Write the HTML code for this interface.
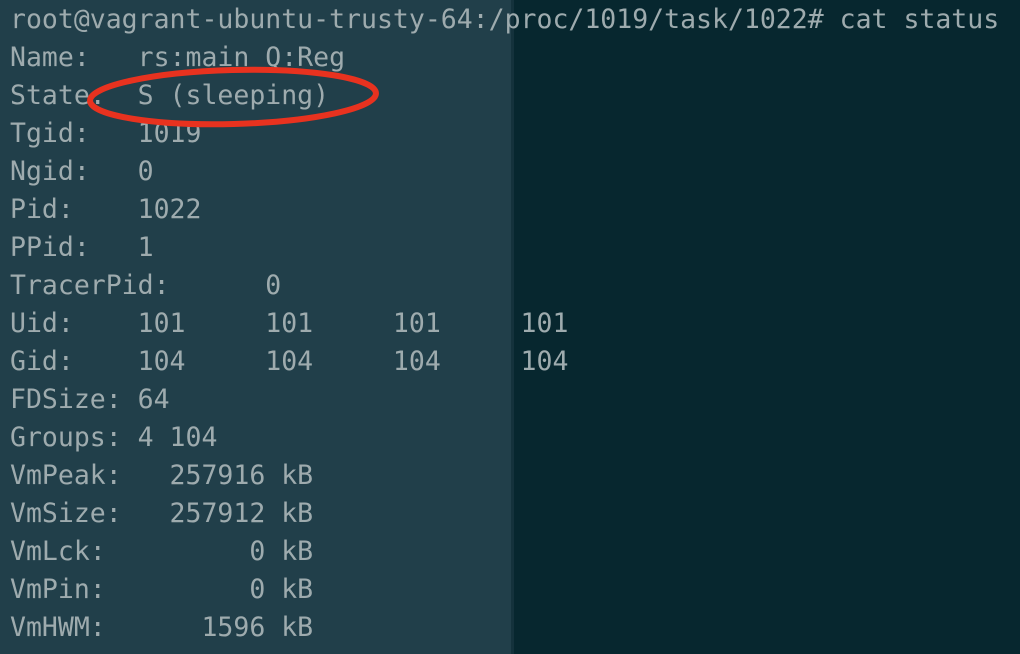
<!DOCTYPE html>
<html><head><meta charset="utf-8"><style>
html,body{margin:0;padding:0;width:1020px;height:654px;overflow:hidden;background:#07272f;}
#w{position:relative;width:1020px;height:654px;overflow:hidden;}
.left{position:absolute;left:0;top:0;width:511px;height:654px;background:#213f4a;}
.edge{position:absolute;left:511px;top:0;width:3px;height:654px;background:#14323c;}
pre{position:absolute;left:10px;top:1px;margin:0;font-family:"DejaVu Sans Mono","Liberation Mono",monospace;font-size:26.5px;line-height:38px;color:#9eabae;tab-size:8;white-space:pre;}
svg{position:absolute;left:0;top:0;}
</style></head><body><div id="w">
<div class="left"></div><div class="edge"></div>
<pre>root@vagrant-ubuntu-trusty-64:/proc/1019/task/1022# cat status
Name:   rs:main Q:Reg
State:  S (sleeping)
Tgid:   1019
Ngid:   0
Pid:    1022
PPid:   1
TracerPid:      0
Uid:    101     101     101     101
Gid:    104     104     104     104
FDSize: 64
Groups: 4 104
VmPeak:   257916 kB
VmSize:   257912 kB
VmLck:         0 kB
VmPin:         0 kB
VmHWM:      1596 kB</pre>
<svg width="1020" height="654"><ellipse cx="233" cy="97" rx="143" ry="27" fill="none" stroke="#e8321f" stroke-width="6" transform="rotate(-1.5 233 97)"/></svg>
</div></body></html>
